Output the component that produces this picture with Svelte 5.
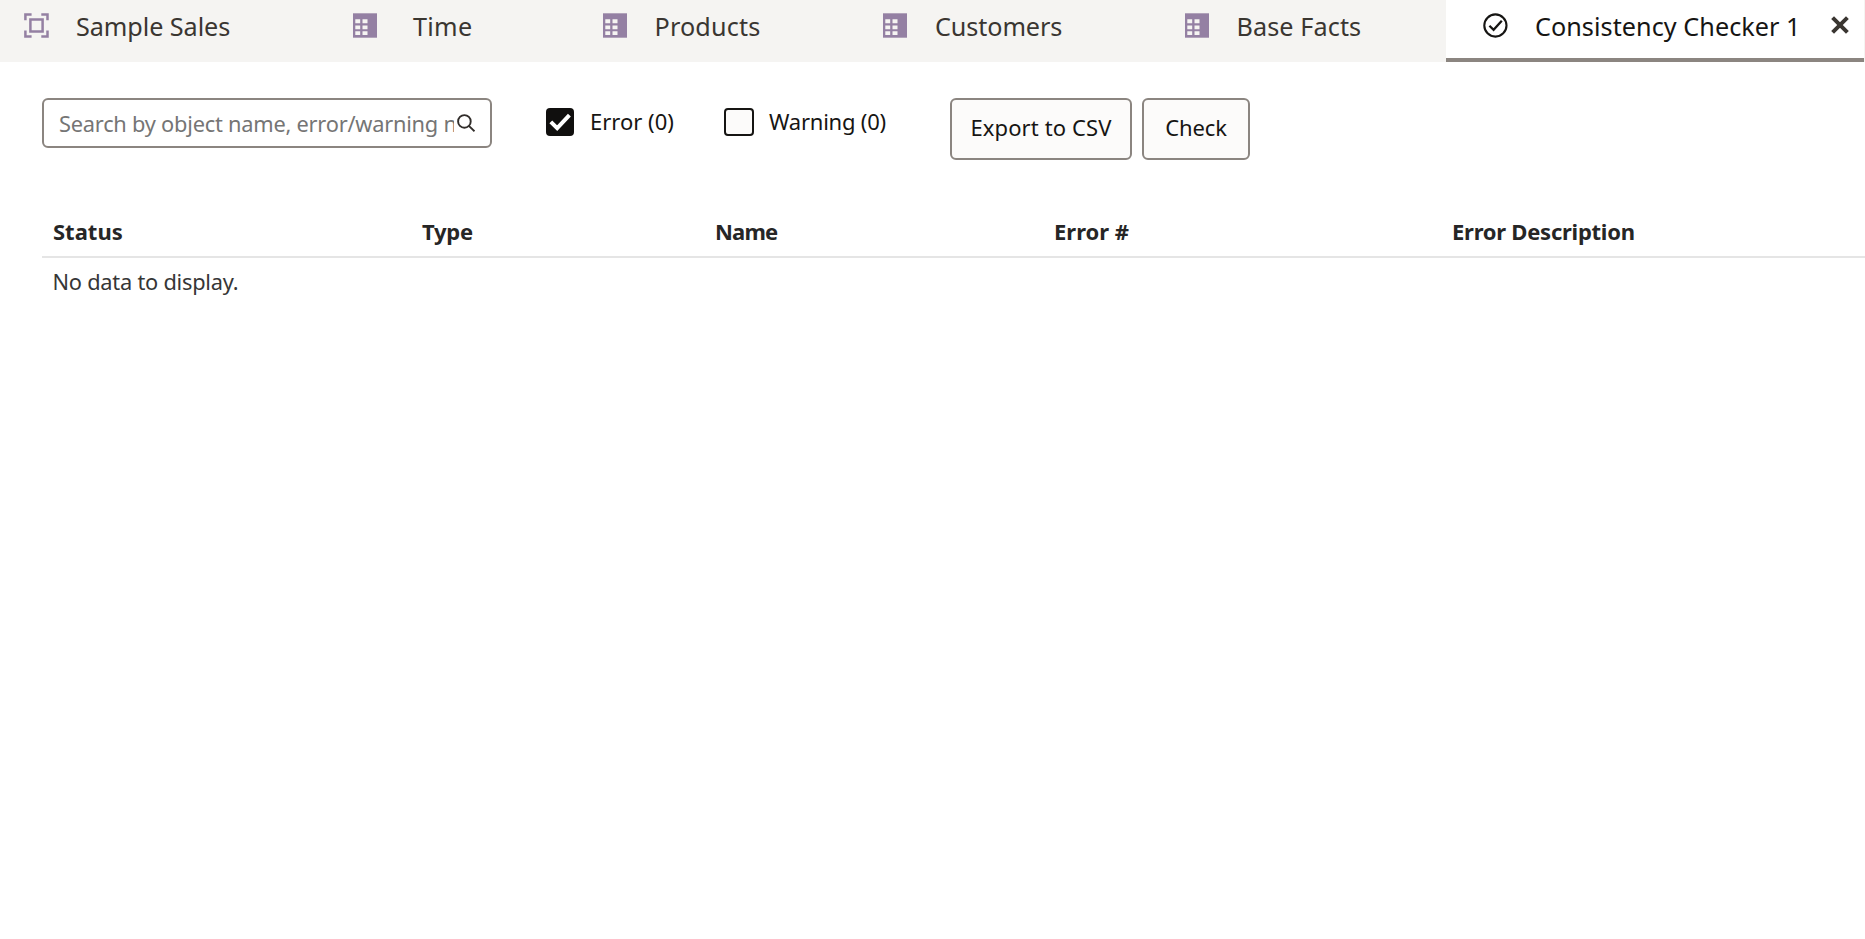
<script>
  const tabs = [
    { label: 'Sample Sales', icon: 'model', width: 329, gap: 27, spacing: -0.06 },
    { label: 'Time', icon: 'table', width: 250, gap: 35, spacing: 0.3 },
    { label: 'Products', icon: 'table', width: 280, gap: 26.5, spacing: 0.15 },
    { label: 'Customers', icon: 'table', width: 302, gap: 27, spacing: -0.1 },
    { label: 'Base Facts', icon: 'table', width: 285, gap: 26.5, spacing: 0.1 }
  ];
  const columns = [
    { label: 'Status', width: 369, spacing: 0 },
    { label: 'Type', width: 293, spacing: -0.25 },
    { label: 'Name', width: 339, spacing: -0.8 },
    { label: 'Error #', width: 398, spacing: 0 },
    { label: 'Error Description', width: 423, spacing: -0.25 }
  ];
  let showErrors = $state(true);
  let showWarnings = $state(false);
</script>

<nav class="tabs">
  {#each tabs as tab}
    <div class="tab" style="width: {tab.width}px">
      {#if tab.icon === 'model'}
        <svg class="icon" viewBox="0 0 25 25" fill="none" stroke="#9480a3" stroke-width="2.5">
          <path d="M1.4 7.3V1.4H7.6M17.3 1.4h6.2v5.9M23.5 17.6v6h-6.2M7.6 23.6H1.4v-6" />
          <path d="M6.4 6.4h12.2v12.2H6.4z" />
        </svg>
      {:else}
        <svg class="icon" viewBox="0 0 25 25">
          <path d="M0 .3h24v24.4H0z" fill="#9480a3" />
          <path d="M2.3 6.2h4.9v4H2.3zM9.5 6.2h5v4h-5zM2.3 12.4h4.9v3.8H2.3zM9.5 12.4h5v3.8h-5zM2.3 18.3h4.9v3.8H2.3zM9.5 18.3h5v3.8h-5z" fill="#f5f4f2" />
        </svg>
      {/if}
      <span style="margin-left: {tab.gap}px; letter-spacing: {tab.spacing}px">{tab.label}</span>
    </div>
  {/each}
  <div class="tab active">
    <svg class="icon" viewBox="0 0 25 25" fill="none" stroke="#161513">
      <circle cx="12.4" cy="12.5" r="11.1" stroke-width="2.1" />
      <path d="M6.4 12.7l4.2 4.1 8.2-9" stroke-width="2.3" />
    </svg>
    <span class="title">Consistency Checker 1</span>
    <svg class="close" viewBox="0 0 18 18" stroke="#3a3631" stroke-width="4"><path d="M1.6 1.6l14.8 14.8M16.4 1.6L1.6 16.4" /></svg>
  </div>
</nav>

<main>
  <div class="toolbar">
    <div class="search">
      <span class="hint">Search by object name, error/warning number</span>
      <svg viewBox="0 0 18 18" fill="none" stroke="#312d2a" stroke-width="1.9"><circle cx="7.4" cy="7.4" r="6.3" /><path d="M11.9 11.9l5.6 5.4" /></svg>
    </div>
    <button class="check error" onclick={() => (showErrors = !showErrors)}>
      <span class="box" class:on={showErrors}>
        {#if showErrors}<svg viewBox="0 0 28 28" fill="none" stroke="#fff" stroke-width="4"><path d="M4.8 13.8l6.4 6.4L23.4 7.2" /></svg>{/if}
      </span>
      <span class="name">Error (0)</span>
    </button>
    <button class="check warning" onclick={() => (showWarnings = !showWarnings)}>
      <span class="box wide" class:on={showWarnings}></span>
      <span class="name">Warning (0)</span>
    </button>
    <button class="action export">Export to CSV</button>
    <button class="action run">Check</button>
  </div>

  <div class="table">
    <div class="head">
      {#each columns as column}
        <div style="width: {column.width}px; letter-spacing: {column.spacing}px">{column.label}</div>
      {/each}
    </div>
    <div class="empty">No data to display.</div>
  </div>
</main>

<style>
  :global(body) {
    margin: 0;
    background: #fff;
    overflow: hidden;
    font-family: 'Noto Sans', sans-serif;
    font-size: 22px;
    color: #161513;
  }
  .tabs {
    display: flex;
    height: 62px;
    background: #f5f4f2;
    font-size: 25.2px;
    line-height: 34px;
    color: #3a3631;
  }
  .tab {
    box-sizing: border-box;
    flex: none;
    display: flex;
    align-items: flex-start;
    padding: 9px 0 0 24px;
    white-space: nowrap;
  }
  .tab .icon {
    flex: none;
    width: 25px;
    height: 25px;
    margin-top: 4px;
  }
  .tab.active {
    width: 418px;
    padding-left: 37px;
    background: #fff;
    border-bottom: 4px solid #8b8580;
    color: #161513;
  }
  .tab.active .title {
    width: 297px;
    margin-left: 27px;
    letter-spacing: 0.05px;
  }
  .close {
    width: 18px;
    height: 18px;
    margin: 7px 0 0 -1px;
  }
  .toolbar {
    display: flex;
    align-items: flex-start;
    padding: 36px 0 0 42px;
  }
  .search {
    box-sizing: border-box;
    display: flex;
    align-items: center;
    width: 450px;
    height: 50px;
    padding-left: 15px;
    border: 2px solid #8b8580;
    border-radius: 6px;
  }
  .hint {
    width: 395px;
    overflow: hidden;
    white-space: nowrap;
    font-size: 21.8px;
    line-height: 30px;
    letter-spacing: -0.23px;
    color: #757575;
    padding-top: 2px;
  }
  .search svg {
    flex: none;
    width: 18px;
    height: 18px;
    margin: 0 0 1px 3px;
  }
  button {
    font: inherit;
    color: inherit;
    padding: 0;
    border: 0;
    background: none;
    white-space: nowrap;
  }
  .check {
    display: flex;
    align-items: center;
    height: 28px;
    margin-top: 10px;
  }
  .check.error {
    width: 178px;
    margin-left: 54px;
  }
  .check.warning {
    width: 226px;
  }
  .box {
    box-sizing: border-box;
    width: 28px;
    height: 28px;
    flex: none;
    margin-right: 16px;
    border: 2px solid #161513;
    border-radius: 4px;
    background: #fcfbfa;
  }
  .box.wide {
    width: 30px;
    margin-right: 15px;
  }
  .box.on {
    border: 0;
    background: #100f0e;
  }
  .box svg {
    display: block;
    width: 28px;
    height: 28px;
  }
  .name {
    margin-bottom: 2px;
  }
  .warning .name {
    letter-spacing: -0.22px;
  }
  .action {
    box-sizing: border-box;
    height: 62px;
    padding-bottom: 4px;
    border: 2px solid #8b8580;
    border-radius: 6px;
    background: #fcfbfa;
  }
  .export {
    width: 182px;
    margin-right: 10px;
    letter-spacing: 0.12px;
  }
  .run {
    width: 108px;
    letter-spacing: -0.15px;
  }
  .table {
    margin: 53px 0 0 42px;
    color: #262626;
  }
  .head {
    display: flex;
    box-sizing: border-box;
    height: 45px;
    padding: 3px 0 0 11px;
    border-bottom: 2px solid #e5e5e5;
    font-weight: 700;
    line-height: 30px;
    white-space: nowrap;
    overflow: hidden;
  }
  .head div {
    flex: none;
  }
  .empty {
    padding: 9px 0 0 10.5px;
    font-size: 21.8px;
    line-height: 30px;
    letter-spacing: -0.24px;
    color: #363636;
  }
</style>
